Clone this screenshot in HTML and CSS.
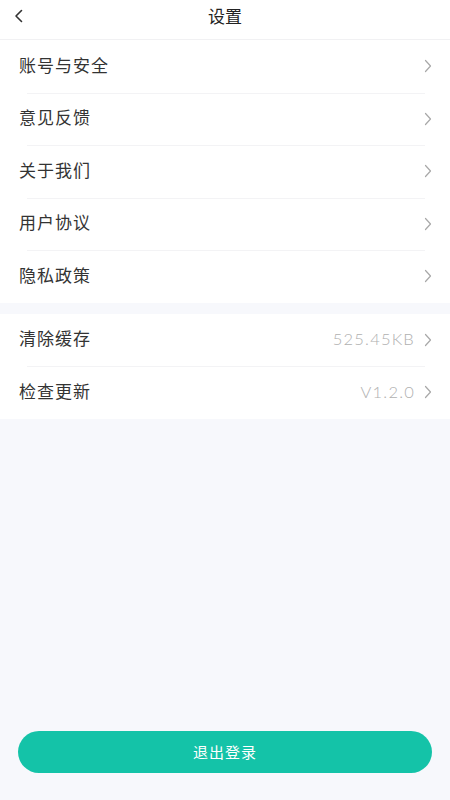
FILE: index.html
```html
<!DOCTYPE html>
<html lang="zh">
<head>
<meta charset="utf-8">
<title>设置</title>
<link rel="stylesheet" href="styles.css">
</head>
<body>
<div class="page">
  <header class="topbar">
    <span class="back">
      <svg width="10" height="14" viewBox="0 0 10 14"><path d="M7.5 1.5 L2 7 L7.5 12.5" fill="none" stroke="#333" stroke-width="1.6" stroke-linecap="round" stroke-linejoin="round"/></svg>
    </span>
    <h1 class="title">设置</h1>
  </header>
  <section class="group">
    <div class="row"><span class="label">账号与安全</span><span class="right"><svg class="chev" width="8" height="14" viewBox="0 0 8 14"><path d="M1.5 1.5 L6.5 7 L1.5 12.5" fill="none" stroke="#a8a8a8" stroke-width="1.2" stroke-linecap="round" stroke-linejoin="round"/></svg></span></div>
    <div class="row"><span class="label">意见反馈</span><span class="right"><svg class="chev" width="8" height="14" viewBox="0 0 8 14"><path d="M1.5 1.5 L6.5 7 L1.5 12.5" fill="none" stroke="#a8a8a8" stroke-width="1.2" stroke-linecap="round" stroke-linejoin="round"/></svg></span></div>
    <div class="row"><span class="label">关于我们</span><span class="right"><svg class="chev" width="8" height="14" viewBox="0 0 8 14"><path d="M1.5 1.5 L6.5 7 L1.5 12.5" fill="none" stroke="#a8a8a8" stroke-width="1.2" stroke-linecap="round" stroke-linejoin="round"/></svg></span></div>
    <div class="row"><span class="label">用户协议</span><span class="right"><svg class="chev" width="8" height="14" viewBox="0 0 8 14"><path d="M1.5 1.5 L6.5 7 L1.5 12.5" fill="none" stroke="#a8a8a8" stroke-width="1.2" stroke-linecap="round" stroke-linejoin="round"/></svg></span></div>
    <div class="row"><span class="label">隐私政策</span><span class="right"><svg class="chev" width="8" height="14" viewBox="0 0 8 14"><path d="M1.5 1.5 L6.5 7 L1.5 12.5" fill="none" stroke="#a8a8a8" stroke-width="1.2" stroke-linecap="round" stroke-linejoin="round"/></svg></span></div>
  </section>
  <section class="group">
    <div class="row"><span class="label">清除缓存</span><span class="right"><span class="value">525.45KB</span><svg class="chev" width="8" height="14" viewBox="0 0 8 14"><path d="M1.5 1.5 L6.5 7 L1.5 12.5" fill="none" stroke="#a8a8a8" stroke-width="1.2" stroke-linecap="round" stroke-linejoin="round"/></svg></span></div>
    <div class="row"><span class="label">检查更新</span><span class="right"><span class="value">V1.2.0</span><svg class="chev" width="8" height="14" viewBox="0 0 8 14"><path d="M1.5 1.5 L6.5 7 L1.5 12.5" fill="none" stroke="#a8a8a8" stroke-width="1.2" stroke-linecap="round" stroke-linejoin="round"/></svg></span></div>
  </section>
  <div class="spacer"></div>
  <div class="footer">
    <button class="logout">退出登录</button>
  </div>
</div>
</body>
</html>
```
FILE: styles.css
```css
* { box-sizing: border-box; }
html, body { margin: 0; padding: 0; }
body {
  font-family: "Noto Sans CJK SC", "Noto Sans", sans-serif;
  background: #f7f8fc;
  color: #333;
}
.page {
  width: 450px;
  height: 800px;
  display: flex;
  flex-direction: column;
}
.topbar {
  height: 40px;
  background: #fff;
  border-bottom: 1px solid #f1f1f3;
  display: flex;
  align-items: center;
  justify-content: center;
  position: relative;
}
.back {
  position: absolute;
  left: 14px;
  top: 9px;
  display: flex;
}
.title {
  margin: 0;
  font-size: 17px;
  font-weight: 400;
  color: #222;
  line-height: 1;
  margin-top: -8px;
}
.group {
  background: #fff;
}
.group + .group {
  margin-top: 11px;
}
.row {
  height: 52.5px;
  display: flex;
  align-items: center;
  justify-content: space-between;
  padding: 0 18px 0 19px;
  position: relative;
}
.row + .row::before {
  content: "";
  position: absolute;
  left: 27px;
  right: 25px;
  top: 0;
  height: 1px;
  background: #f3f3f5;
}
.label {
  font-size: 17px;
  color: #333;
  letter-spacing: 1px;
  margin-bottom: 4px;
}
.right {
  display: flex;
  align-items: center;
  gap: 9px;
}
.value {
  font-family: "Lato", "Noto Sans", sans-serif;
  font-weight: 300;
  font-size: 16.5px;
  color: #b0b0b0;
  letter-spacing: 1.2px;
  margin-bottom: 1px;
}
.chev { display: block; }
.spacer { flex: 1; }
.footer {
  padding: 0 18px 27px;
}
.logout {
  width: 100%;
  height: 42px;
  border: none;
  border-radius: 21px;
  background: #14c3a8;
  color: #fff;
  font-family: "Noto Sans CJK SC", sans-serif;
  font-size: 15px;
  letter-spacing: 1px;
  padding-bottom: 2px;
}
```
